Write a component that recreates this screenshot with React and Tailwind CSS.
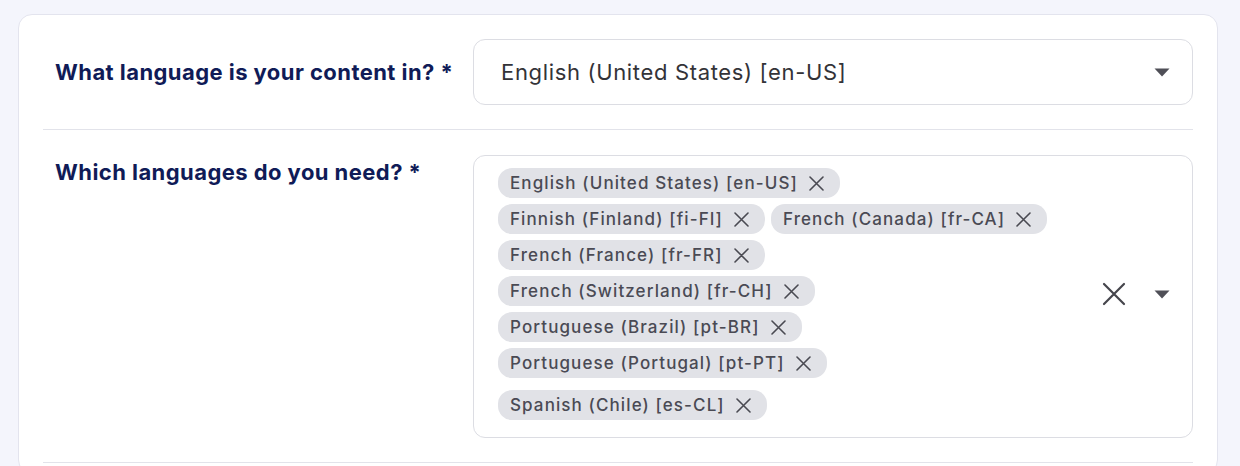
import React from "react";

const chips = [
  "English (United States) [en-US]",
  "Finnish (Finland) [fi-FI]",
  "French (Canada) [fr-CA]",
  "French (France) [fr-FR]",
  "French (Switzerland) [fr-CH]",
  "Portuguese (Brazil) [pt-BR]",
  "Portuguese (Portugal) [pt-PT]",
];

function Caret() {
  return (
    <svg width="16" height="9" viewBox="0 0 16 9" className="shrink-0">
      <path d="M0.5 0.5 L15.5 0.5 L8 8.5 Z" fill="#4f4f57" />
    </svg>
  );
}

function SmallX() {
  return (
    <svg width="15" height="15" viewBox="0 0 15 15" className="shrink-0">
      <path d="M1 1 L14 14 M14 1 L1 14" stroke="#4a4a52" strokeWidth="1.6" strokeLinecap="round" />
    </svg>
  );
}

function Chip({ label, extra = "" }) {
  return (
    <div
      className={`flex items-center h-[30px] rounded-[14px] bg-[#e1e2e7] pl-[12px] pr-[16px] ${extra}`}
    >
      <span className="text-[17px] font-medium tracking-[0.065em] text-[#4a4a54] leading-none whitespace-nowrap">
        {label}
      </span>
      <span className="ml-[11px] flex items-center">
        <SmallX />
      </span>
    </div>
  );
}

export default function App() {
  return (
    <div
      className="min-h-screen bg-[#f4f5fc] pt-[14px] pl-[18px]"
      style={{ fontFamily: "Inter, 'Noto Sans', sans-serif" }}
    >
      <div className="w-[1200px] bg-white border border-[#e3e4ee] rounded-[14px] px-[24px]">
        {/* Row 1 */}
        <div className="flex items-center py-[24px] border-b border-[#e2e3ea]">
          <div className="w-[430px] pl-[12px] text-[22px] font-bold tracking-[0.02em] text-[#101b57] leading-[28px]">
            What language is your content in? *
          </div>
          <div className="flex-1 h-[66px] border border-[#dcdde3] rounded-[12px] flex items-center pl-[27px] pr-[22px]">
            <span className="flex-1 text-[22px] tracking-[0.03em] text-[#333338]">English (United States) [en-US]</span>
            <Caret />
          </div>
        </div>
        {/* Row 2 */}
        <div className="flex items-start pt-[25px] pb-[24px] border-b border-[#e2e3ea]">
          <div className="w-[430px] pl-[12px] pt-[3px] text-[22px] font-bold tracking-[0.02em] text-[#101b57] leading-[28px]">
            Which languages do you need? *
          </div>
          <div className="flex-1 border border-[#dcdde3] rounded-[12px] flex items-center pl-[24px] pr-[22px] pt-[12px] pb-[17px]">
            <div className="w-[570px] flex flex-wrap gap-[6px]">
              {chips.map((c) => (
                <Chip key={c} label={c} />
              ))}
              <Chip label="Spanish (Chile) [es-CL]" extra="mt-[6px]" />
            </div>
            <div className="flex-1 flex items-center justify-end">
              <svg width="24" height="24" viewBox="0 0 24 24" className="mr-[28px]">
                <path d="M2 2 L22 22 M22 2 L2 22" stroke="#45454c" strokeWidth="2.2" strokeLinecap="round" />
              </svg>
              <Caret />
            </div>
          </div>
        </div>
        <div className="h-[10px]" />
      </div>
    </div>
  );
}
